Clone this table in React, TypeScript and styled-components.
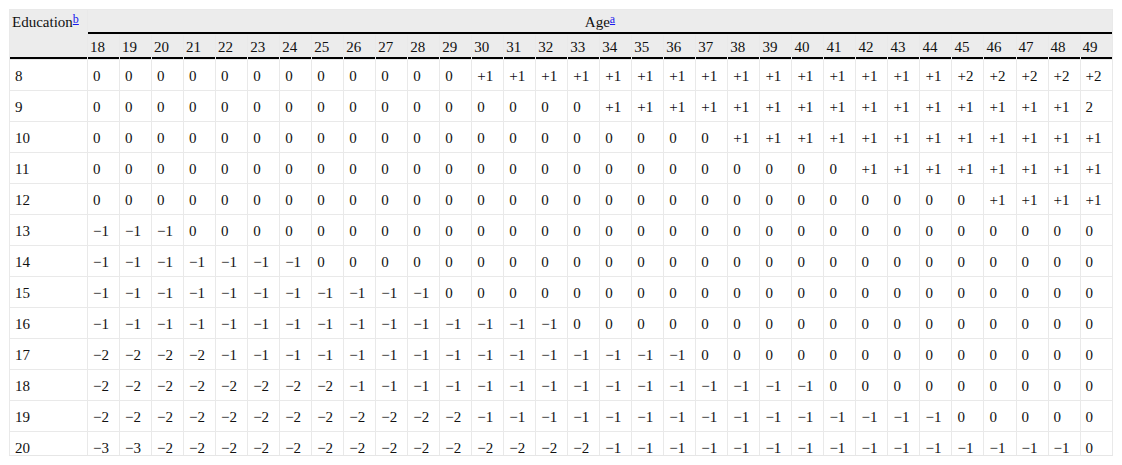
import React from "react";
import styled, { createGlobalStyle } from "styled-components";

const GlobalStyle = createGlobalStyle`
  html, body {
    margin: 0;
    padding: 0;
    background: #fff;
  }
  body {
    font-family: "Liberation Serif", "Times New Roman", serif;
    color: #111;
  }
`;

const ages = Array.from({ length: 32 }, (_, i) => 18 + i);

// each row: list of [value, count] runs across ages 18..49
const runs: Array<[number, Array<[string, number]>]> = [
  [8, [["0", 12], ["+1", 15], ["+2", 5]]],
  [9, [["0", 16], ["+1", 15], ["2", 1]]],
  [10, [["0", 20], ["+1", 12]]],
  [11, [["0", 24], ["+1", 8]]],
  [12, [["0", 28], ["+1", 4]]],
  [13, [["−1", 3], ["0", 29]]],
  [14, [["−1", 7], ["0", 25]]],
  [15, [["−1", 11], ["0", 21]]],
  [16, [["−1", 15], ["0", 17]]],
  [17, [["−2", 4], ["−1", 15], ["0", 13]]],
  [18, [["−2", 8], ["−1", 15], ["0", 9]]],
  [19, [["−2", 12], ["−1", 15], ["0", 5]]],
  [20, [["−3", 2], ["−2", 14], ["−1", 15], ["0", 1]]],
];

const rows = runs.map(([edu, parts]) => ({
  edu,
  values: parts.flatMap(([v, n]) => Array.from({ length: n }, () => v)),
}));

const Wrapper = styled.div`
  margin: 9px 9px 0 9px;
  height: 446px;
  overflow: hidden;
  border-bottom: 1px solid #e6e6e6;
  width: 1104px;
`;

const Table = styled.table`
  table-layout: fixed;
  width: 1104px;
  border-collapse: separate;
  border-spacing: 1px;
  background: #e9e9e9;
  font-family: "Liberation Serif", "Times New Roman", serif;
  font-size: 15px;
  line-height: 17px;
  color: #111;
`;

const HeadCell = styled.th<{ $rule?: boolean; $center?: boolean }>`
  background: #ececec;
  font-family: "Liberation Serif", "Times New Roman", serif;
  font-size: 15px;
  line-height: 17px;
  font-weight: normal;
  text-align: ${(p) => (p.$center ? "center" : "left")};
  vertical-align: top;
  padding: 4px 2px 1px 2px;
  white-space: nowrap;
  border-bottom: ${(p) => (p.$rule ? "2px solid #000" : "none")};
`;

const Cell = styled.td`
  background: #fff;
  font-family: "Liberation Serif", "Times New Roman", serif;
  font-size: 15px;
  line-height: 17px;
  padding: 8px 0 5px 5px;
  white-space: nowrap;
  text-align: left;
`;

const Note = styled.sup`
  font-size: 12px;
  line-height: 0;
  vertical-align: 4px;
  a {
    color: #1a1aee;
    text-decoration: underline;
  }
`;

export default function App() {
  return (
    <>
      <GlobalStyle />
      <Wrapper>
        <Table>
          <colgroup>
            <col style={{ width: 77 }} />
            {ages.map((a) => (
              <col key={a} style={{ width: 31 }} />
            ))}
          </colgroup>
          <thead>
            <tr>
              <HeadCell rowSpan={2} $rule>
                Education
                <Note>
                  <a href="#b">b</a>
                </Note>
              </HeadCell>
              <HeadCell colSpan={32} $rule $center>
                Age
                <Note>
                  <a href="#a">a</a>
                </Note>
              </HeadCell>
            </tr>
            <tr>
              {ages.map((a) => (
                <HeadCell key={a} $rule>
                  {a}
                </HeadCell>
              ))}
            </tr>
          </thead>
          <tbody>
            {rows.map((r) => (
              <tr key={r.edu}>
                <Cell>{r.edu}</Cell>
                {r.values.map((v, i) => (
                  <Cell key={i}>{v}</Cell>
                ))}
              </tr>
            ))}
          </tbody>
        </Table>
      </Wrapper>
    </>
  );
}
